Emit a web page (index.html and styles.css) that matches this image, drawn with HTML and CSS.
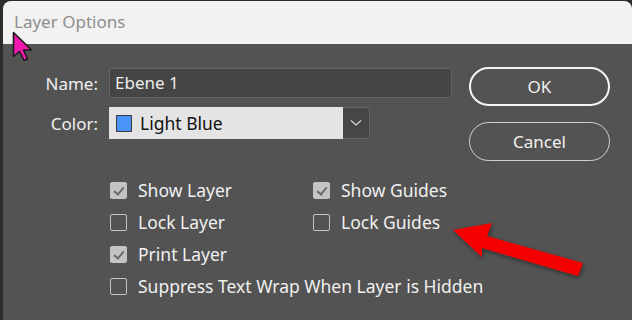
FILE: index.html
```html
<!DOCTYPE html>
<html lang="en">

<head>
    <meta charset="UTF-8">
    <title>Layer Options</title>
    <link rel="stylesheet" href="styles.css">
</head>

<body>

<div class="window">
    <header class="titlebar">Layer Options</header>

    <section class="dialog">
        <div class="left">
            <div class="fields">
                <label class="field-label" for="layerName">Name:</label>
                <div class="text-input" id="layerName">Ebene 1</div>

                <label class="field-label">Color:</label>
                <div class="select">
                    <div class="select-value">
                        <span class="swatch"></span>
                        <span>Light Blue</span>
                    </div>
                    <div class="select-arrow">
                        <svg width="12" height="8" viewBox="0 0 12 8">
                            <path d="M1 1.5 L6 6 L11 1.5" fill="none" stroke="#d8d8d8" stroke-width="1.2"/>
                        </svg>
                    </div>
                </div>
            </div>

            <div class="checks">
                <div class="check checked"><span class="box"></span>Show Layer</div>
                <div class="check checked"><span class="box"></span>Show Guides</div>
                <div class="check"><span class="box"></span>Lock Layer</div>
                <div class="check"><span class="box"></span>Lock Guides</div>
                <div class="check checked"><span class="box"></span>Print Layer</div>
                <div class="check"></div>
                <div class="check wide"><span class="box"></span>Suppress Text Wrap When Layer is Hidden</div>
            </div>
        </div>

        <div class="buttons">
            <button class="btn btn-ok">OK</button>
            <button class="btn">Cancel</button>
        </div>
    </section>
</div>

<!-- annotation on top of the screenshot -->
<svg class="red-arrow" width="632" height="320" viewBox="0 0 632 320">
    <defs>
        <filter id="shadow" x="-20%" y="-20%" width="140%" height="140%">
            <feDropShadow dx="1" dy="2" stdDeviation="2" flood-color="#000" flood-opacity="0.45"/>
        </filter>
    </defs>
    <polygon filter="url(#shadow)" fill="#f50000"
             points="453,230 492,223 487,236 583,263 578,276 482,248 482,257"/>
</svg>

<svg class="cursor" width="26" height="32" viewBox="0 0 26 32">
    <path d="M1.5 1.5 L1.5 25.5 L7.5 20.5 L12 29.5 L15.5 28 L11.5 19 L19.5 19 Z"
          fill="#f01aae" stroke="#1a1a1a" stroke-width="1.6" stroke-linejoin="round"/>
</svg>

</body>
</html>
```

FILE: styles.css
```css
body {
    margin: 0;
    width: 632px;
    height: 320px;
    overflow: hidden;
    background-color: #2c2c2c;
    font-family: "Noto Sans", "Open Sans", sans-serif;
    position: relative;
}

.window {
    margin: 1px 0 0 3px;
    height: 319px;
    border-radius: 8px 8px 0 0;
    overflow: hidden;
    background-color: #535353;
}

.titlebar {
    height: 43px;
    background-color: #f2f2f2;
    color: #8e8e8e;
    font-size: 17px;
    padding-left: 11px;
    display: flex;
    align-items: center;
    padding-bottom: 3px;
    box-sizing: border-box;
}

.dialog {
    display: flex;
    gap: 17px;
    padding-top: 24px;
}

.left {
    width: 449px;
}

.fields {
    display: grid;
    grid-template-columns: 95px auto;
    column-gap: 11px;
    row-gap: 9px;
    align-items: center;
}

.field-label {
    color: #f0f0f0;
    font-size: 17px;
    text-align: right;
}

.text-input {
    width: 343px;
    height: 30px;
    box-sizing: border-box;
    background-color: #454545;
    border: 1px solid #656565;
    border-radius: 3px;
    color: #ececec;
    font-size: 17px;
    line-height: 28px;
    padding-left: 5px;
}

.select {
    width: 261px;
    height: 32px;
    display: flex;
}

.select-value {
    flex: 1;
    background-color: #e4e4e4;
    display: flex;
    align-items: center;
    gap: 8px;
    padding-left: 7px;
    color: #111;
    font-size: 17.5px;
}

.swatch {
    width: 14px;
    height: 15px;
    background-color: #4b93f8;
    border: 1px solid #3a3a3a;
}

.select-arrow {
    width: 27px;
    box-sizing: border-box;
    background-color: #464646;
    border: 1px solid #666;
    border-left: none;
    border-radius: 0 3px 3px 0;
    display: flex;
    align-items: center;
    justify-content: center;
}

.checks {
    margin: 35px 0 0 107px;
    display: grid;
    grid-template-columns: 203px auto;
    grid-auto-rows: 32px;
}

.check {
    display: flex;
    align-items: center;
    gap: 11px;
    color: #f0f0f0;
    font-size: 17.5px;
    white-space: nowrap;
}

.check.wide {
    grid-column: span 2;
}

.box {
    width: 17px;
    height: 17px;
    box-sizing: border-box;
    border: 1px solid #c4c4c4;
    border-radius: 2px;
    position: relative;
}

.check.checked .box {
    background-color: #c4c4c4;
}

.check.checked .box::after {
    content: "";
    position: absolute;
    left: 5px;
    top: 2px;
    width: 4px;
    height: 8px;
    border: solid #6a6a6a;
    border-width: 0 2px 2px 0;
    transform: rotate(40deg);
}

.buttons {
    display: flex;
    flex-direction: column;
    gap: 16px;
    margin-top: -1px;
}

.btn {
    width: 141px;
    height: 39px;
    border: 1px solid #d0d0d0;
    border-radius: 20px;
    background: transparent;
    color: #f2f2f2;
    font-family: "Noto Sans", "Open Sans", sans-serif;
    font-size: 17px;
    padding: 0;
}

.btn-ok {
    border: 2px solid #f5f5f5;
}

.red-arrow {
    position: absolute;
    left: 0;
    top: 0;
}

.cursor {
    position: absolute;
    left: 12px;
    top: 31px;
}
```
